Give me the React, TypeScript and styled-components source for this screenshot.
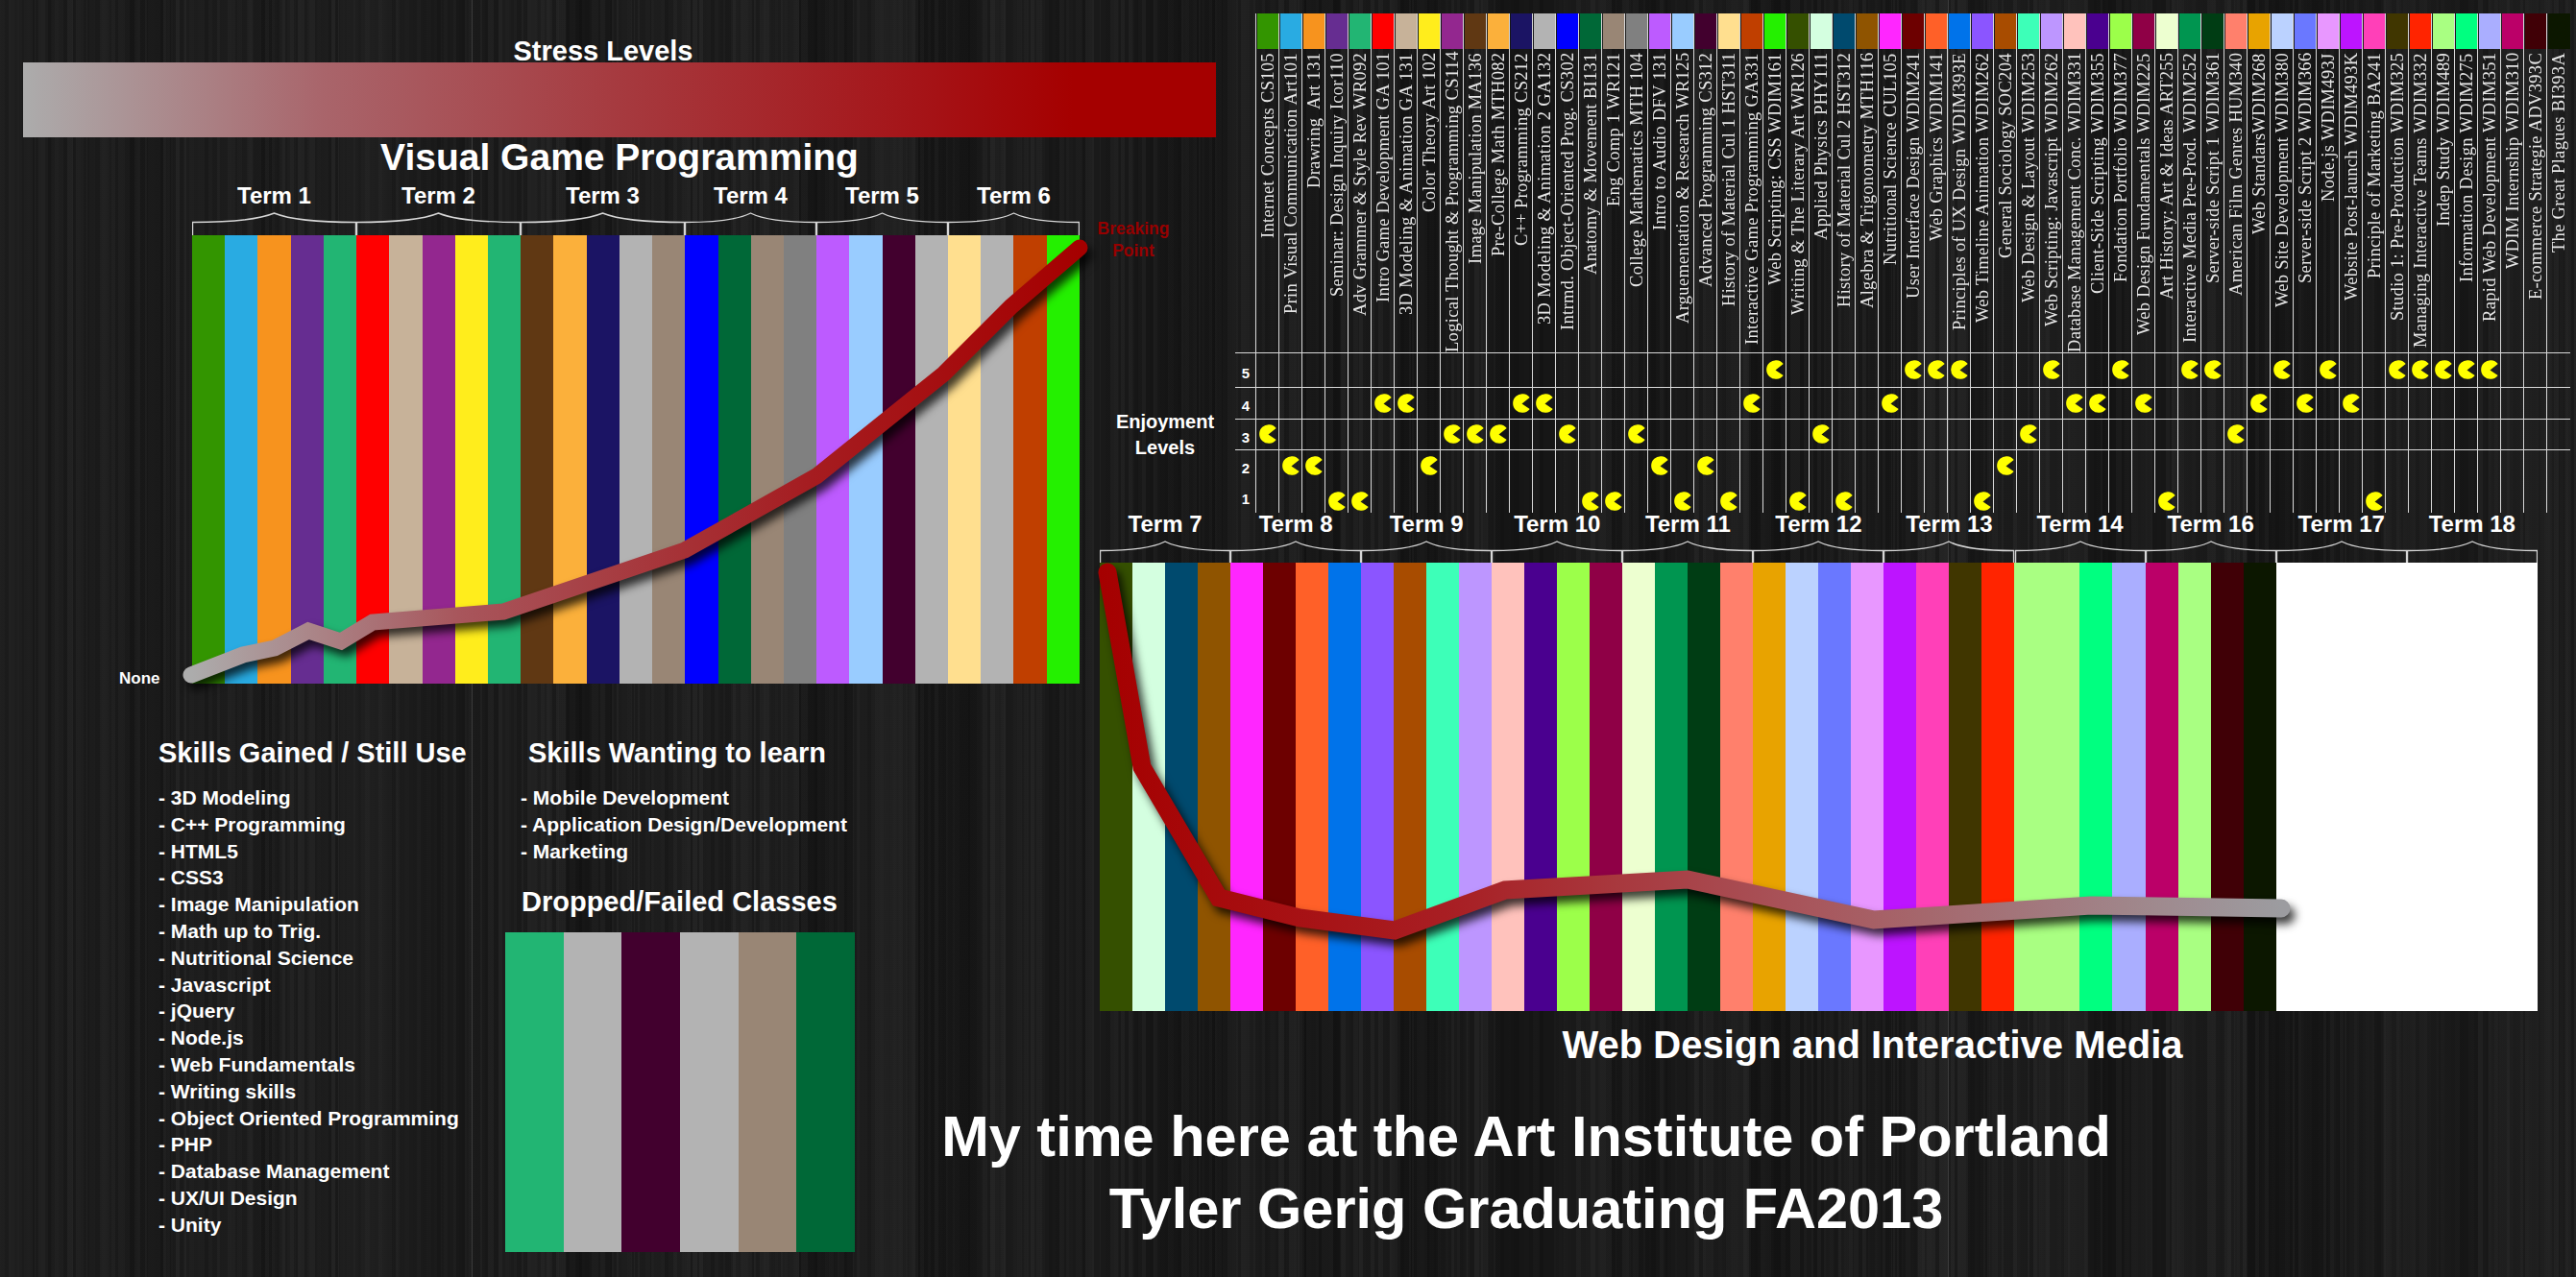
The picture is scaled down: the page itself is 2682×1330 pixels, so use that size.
import React from "react";
import styled, { createGlobalStyle } from "styled-components";

const GlobalStyle = createGlobalStyle`
  html, body {
    margin: 0;
    padding: 0;
    background: #1a1a1a;
  }
`;

const headingFont = `"Liberation Sans", Arial, sans-serif`;

// irregular vertical streaks for the wood grain behind everything
function grain(seed: number, minW: number, maxW: number, dark: number, light: number) {
  let s = seed;
  const rand = () => {
    s = (s * 16807) % 2147483647;
    return s / 2147483647;
  };
  const stops: string[] = [];
  let x = 0;
  while (x < 2682) {
    const w = Math.round(minW + rand() * (maxW - minW));
    const r = rand();
    const color =
      r < 0.55
        ? `rgba(0,0,0,${(rand() * dark).toFixed(3)})`
        : `rgba(255,255,255,${(rand() * light).toFixed(3)})`;
    stops.push(`${color} ${x}px ${x + w}px`);
    x += w;
  }
  return `linear-gradient(90deg, ${stops.join(", ")})`;
}

const courses: [string, string, number][] = [
  ["Internet Concepts CS105", "#339500", 3],
  ["Prin Visual Communication Art101", "#29abe2", 2],
  ["Drawring  Art 131", "#f7931e", 2],
  ["Seminar: Design Inquiry Icor110", "#662d91", 1],
  ["Adv Grammer & Style Rev WR092", "#22b573", 1],
  ["Intro Game Development GA 101", "#ff0000", 4],
  ["3D Modeling & Animation GA 131", "#c7b299", 4],
  ["Color Theory Art 102", "#ffed1c", 2],
  ["Logical Thought & Programming CS114", "#93278f", 3],
  ["Image Manipulation MA136", "#603813", 3],
  ["Pre-College Math MTH082", "#fbb03b", 3],
  ["C++ Programming CS212", "#1b1464", 4],
  ["3D Modeling & Animation 2 GA132", "#b3b3b3", 4],
  ["Intrmd. Object-Oriented Prog. CS302", "#0000ff", 3],
  ["Anatomy & Movement BI131", "#006837", 1],
  ["Eng Comp 1 WR121", "#998675", 1],
  ["College Mathematics MTH 104", "#808080", 3],
  ["Intro to Audio DFV 131", "#bd5bff", 2],
  ["Arguementation & Research WR125", "#99ccff", 1],
  ["Advanced Programming CS312", "#42002e", 2],
  ["History of Material Cul 1 HST311", "#ffdf8f", 1],
  ["Interactive Game Programming GA331", "#c03f00", 4],
  ["Web Scripting: CSS WDIM161", "#24f000", 5],
  ["Writing & The Literary Art WR126", "#355000", 1],
  ["Applied Physics PHY111", "#d4ffe0", 3],
  ["History of Material Cul 2 HST312", "#004a6e", 1],
  ["Algebra & Trigonometry MTH116", "#8f5400", 0],
  ["Nutritional Science CUL105", "#ff26ff", 4],
  ["User Interface Design WDIM241", "#6d0000", 5],
  ["Web Graphics WDIM141", "#ff6028", 5],
  ["Principles of UX Design WDIM393E", "#0073ea", 5],
  ["Web Timeline Animation WDIM262", "#8b55ff", 1],
  ["General Sociology SOC204", "#a84c00", 2],
  ["Web Design & Layout WDIM253", "#3dffb8", 3],
  ["Web Scripting: Javascript WDIM262", "#bd96ff", 5],
  ["Database Management Conc. WDIM331", "#ffc2bc", 4],
  ["Client-Side Scripting WDIM355", "#4a008f", 4],
  ["Fondation Portfolio WDIM377", "#9cff4a", 5],
  ["Web Design Fundamentals WDIM225", "#8f0046", 4],
  ["Art History: Art & Ideas ART255", "#edffd0", 1],
  ["Interactive Media Pre-Prod. WDIM252", "#009550", 5],
  ["Server-side Script 1 WDIM361", "#003d14", 5],
  ["American Film Genres HUM340", "#ff806c", 3],
  ["Web StandarsWDIM268", "#e8a300", 4],
  ["Web Site Development WDIM380", "#bbd2ff", 5],
  ["Server-side Script 2 WDIM366", "#6a78ff", 4],
  ["Node.js WDIM493J", "#e897ff", 5],
  ["Website Post-launch WDIM493K", "#bd14ff", 4],
  ["Principle of Marketing BA241", "#ff40b8", 1],
  ["Studio 1: Pre-Production WDIM325", "#403600", 5],
  ["Managing Interactive Teams WDIM332", "#ff2400", 5],
  ["Indep Study WDIM489", "#a9ff82", 5],
  ["Information Design WDIM275", "#00ff80", 5],
  ["Rapid Web Development WDIM351", "#aaaeff", 5],
  ["WDIM Internship WDIM310", "#bb0068", 0],
  ["E-commerce Strategie ADV393C", "#400006", 0],
  ["The Great Plagues BI393A", "#0c1700", 0],
];

const gameBars = [
  "#339500", "#29abe2", "#f7931e", "#662d91", "#22b573",
  "#ff0000", "#c7b299", "#93278f", "#ffed1c", "#22b573",
  "#603813", "#fbb03b", "#1b1464", "#b3b3b3", "#998675",
  "#0000ff", "#006837", "#998675", "#808080",
  "#bd5bff", "#99ccff", "#42002e", "#b3b3b3",
  "#ffdf8f", "#b3b3b3", "#c03f00", "#24f000",
];

const webBars = [
  "#355000", "#d4ffe0", "#004a6e", "#8f5400", "#ff26ff", "#6d0000", "#ff6028", "#0073ea", "#8b55ff",
  "#a84c00", "#3dffb8", "#bd96ff", "#ffc2bc", "#4a008f", "#9cff4a", "#8f0046", "#edffd0", "#009550",
  "#003d14", "#ff806c", "#e8a300", "#bbd2ff", "#6a78ff", "#e897ff", "#bd14ff", "#ff40b8", "#403600",
  "#ff2400", "#a9ff82", "#a9ff82", "#00ff80", "#aaaeff", "#bb0068", "#a9ff82", "#400006", "#0c1700",
  "#fff", "#fff", "#fff", "#fff", "#fff", "#fff", "#fff", "#fff",
];

const droppedBars = ["#22b573", "#b3b3b3", "#42002e", "#b3b3b3", "#998675", "#006837"];

const gameTerms: [string, number][] = [
  ["Term 1", 171], ["Term 2", 171], ["Term 3", 171], ["Term 4", 137], ["Term 5", 137], ["Term 6", 137],
];

const webTerms = ["Term 7", "Term 8", "Term 9", "Term 10", "Term 11", "Term 12", "Term 13", "Term 14", "Term 16", "Term 17", "Term 18"];

const skillsGained = [
  "3D Modeling", "C++ Programming", "HTML5", "CSS3", "Image Manipulation", "Math up to Trig.",
  "Nutritional Science", "Javascript", "jQuery", "Node.js", "Web Fundamentals", "Writing skills",
  "Object Oriented Programming", "PHP", "Database Management", "UX/UI Design", "Unity",
];

const skillsWanted = ["Mobile Development", "Application Design/Development", "Marketing"];

const Page = styled.div`
  width: 2682px;
  height: 1330px;
  overflow: hidden;
  display: grid;
  grid-template-columns: 1145px 1537px;
  color: #fff;
  font-family: ${headingFont};
  background-color: #1d1d1d;
  background-image:
    linear-gradient(90deg, transparent 491px, #3c3c3c 491px, #3c3c3c 492px, transparent 492px),
    linear-gradient(90deg, transparent 2028px, #3c3c3c 2028px, #3c3c3c 2029px, transparent 2029px),
    ${grain(4711, 1, 5, 0.2, 0.025)},
    ${grain(90210, 14, 70, 0.28, 0.012)};
`;

const LeftColumn = styled.section`
  display: flex;
  flex-direction: column;
  padding: 35px 0 0 24px;
`;

const StressTitle = styled.h2`
  margin: 0;
  width: 1208px;
  height: 30px;
  text-align: center;
  font-size: 29px;
  line-height: 36px;
  font-weight: 700;
`;

const StressBar = styled.div`
  width: 1242px;
  height: 78px;
  background: linear-gradient(90deg, #acacac 0%, #a9656b 25%, #a63a3f 50%, #a51418 75%, #a50000 88%, #a50000 100%);
`;

const ProgramTitle = styled.h1`
  margin: 0;
  width: 1242px;
  height: 44px;
  text-align: center;
  font-size: 39px;
  line-height: 42px;
  font-weight: 700;
`;

const ChartBlock = styled.div`
  margin: 5px 0 0 176px;
  width: 924px;
`;

const TermRow = styled.div`
  display: flex;
`;

const TermCell = styled.div<{ $width: number }>`
  width: ${(p) => p.$width}px;
  flex: none;
  display: flex;
  flex-direction: column;
  align-items: center;
`;

const TermName = styled.span`
  font-size: 24px;
  line-height: 24px;
  margin-bottom: 5px;
  font-weight: 700;
  white-space: nowrap;
`;

const BraceSvg = styled.svg`
  display: block;
`;

const Plot = styled.div<{ $height: number }>`
  position: relative;
  display: flex;
  height: ${(p) => p.$height}px;
`;

const Bar = styled.div<{ $color: string }>`
  flex: 1;
  background: ${(p) => p.$color};
`;

const StressLine = styled.svg`
  position: absolute;
  left: 0;
  top: 0;
  overflow: visible;
  filter: drop-shadow(5px 7px 5px rgba(0, 0, 0, 0.75));
`;

const Breaking = styled.div`
  position: absolute;
  left: 925px;
  top: -18px;
  width: 110px;
  text-align: center;
  color: #960000;
  font-size: 17.5px;
  line-height: 23px;
  font-weight: 700;
`;

const NoneLabel = styled.span`
  position: absolute;
  left: -76px;
  bottom: -5px;
  font-size: 17px;
  font-weight: 700;
`;

const SkillsArea = styled.div`
  margin: 54px 0 0 141px;
  display: flex;
`;

const SkillColumn = styled.div<{ $width: number }>`
  width: ${(p) => p.$width}px;
  flex: none;
`;

const SkillHeading = styled.h3<{ $indent?: number }>`
  margin: 0 0 15px ${(p) => p.$indent ?? 0}px;
  font-size: 29px;
  line-height: 36px;
  font-weight: 700;
  white-space: nowrap;
`;

const SkillList = styled.ul`
  margin: 0;
  padding: 0;
  list-style: none;
`;

const SkillItem = styled.li`
  font-size: 21px;
  line-height: 27.8px;
  font-weight: 700;
  white-space: nowrap;
`;

const DroppedHeading = styled(SkillHeading)`
  margin: 21px 0 14px 1px;
`;

const DroppedBars = styled.div`
  margin-left: -16px;
  width: 364px;
  height: 333px;
  display: flex;
`;

const RightColumn = styled.section`
  display: flex;
  flex-direction: column;
  padding-top: 14px;
`;

const MatrixArea = styled.div`
  display: flex;
  height: 520px;
`;

const LevelsLabel = styled.div`
  width: 136px;
  margin-right: 5px;
  flex: none;
  padding-top: 412px;
  box-sizing: border-box;
  text-align: center;
  font-size: 20px;
  line-height: 27px;
  font-weight: 700;
`;

const RowNumbers = styled.div`
  width: 22px;
  height: 520px;
  box-sizing: border-box;
  flex: none;
  padding-top: 356px;
  display: grid;
  grid-template-rows: 36px 33px 32px 33px 30px;
  font-size: 15px;
  font-weight: 700;
  align-items: center;
  text-align: center;
`;

const Matrix = styled.div`
  position: relative;
  display: grid;
  grid-template-columns: repeat(57, 24px);
`;

const RowLines = styled.div`
  position: absolute;
  left: -22px;
  right: 0;
  top: 353px;
  height: 134px;
  display: grid;
  grid-template-rows: 36px 33px 32px 33px;
`;

const RowLine = styled.div`
  border-top: 1px solid #d8d8d8;
`;

const CourseColumn = styled.div`
  height: 520px;
  display: flex;
  flex-direction: column;
  border-left: 1px solid #d8d8d8;
  margin-left: -1px;
`;

const ColorChip = styled.div<{ $color: string }>`
  height: 37px;
  margin-left: 1px;
  flex: none;
  background: ${(p) => p.$color};
`;

const CourseName = styled.div`
  height: 316px;
  flex: none;
  padding-bottom: 4px;
  box-sizing: border-box;
  writing-mode: vertical-rl;
  transform: rotate(180deg);
  text-align: right;
  font-family: "Liberation Serif", serif;
  font-size: 18.5px;
  line-height: 24px;
  letter-spacing: 0.3px;
  color: #e6e6e6;
  white-space: pre;
`;

const PacGrid = styled.div`
  flex: 1;
  min-height: 0;
  display: grid;
  grid-template-rows: 36px 33px 32px 33px 41px;
  justify-items: center;
  align-items: center;
`;

const PacSvg = styled.svg<{ $row: number }>`
  grid-row: ${(p) => p.$row};
  display: block;
`;

const WebChart = styled.div`
  width: 1497px;
`;

const WebCaption = styled.div`
  width: 1497px;
  margin-top: 12px;
  padding-left: 112px;
  box-sizing: border-box;
  text-align: center;
  font-size: 40px;
  line-height: 46px;
  font-weight: 700;
`;

const Closing = styled.div`
  margin: 35px 0 0 -165px;
  width: 1218px;
  text-align: center;
  font-size: 59.5px;
  line-height: 75px;
  font-weight: 700;
  white-space: nowrap;
`;

function Brace({ width, height }: { width: number; height: number }) {
  const mid = width / 2;
  return (
    <BraceSvg width={width} height={height} viewBox={`0 0 ${width} ${height}`}>
      <path
        d={`M0.5 ${height}V10.5C${mid * 0.45} 10.5 ${mid * 0.8} 8 ${mid} 1C${mid * 1.2} 8 ${mid * 1.55} 10.5 ${width - 0.5} 10.5V${height}`}
        fill="none"
        stroke="#d6d6d6"
        strokeWidth="1.4"
      />
    </BraceSvg>
  );
}

function Pacman({ row }: { row: number }) {
  return (
    <PacSvg $row={row} width="18" height="20" viewBox="0 0 18 20">
      <path d="M17.7 4A9.8 9.8 0 1 0 17.7 16L9.5 10.5Z" fill="#ffff00" />
    </PacSvg>
  );
}

export default function App() {
  return (
    <Page>
      <GlobalStyle />
      <LeftColumn>
        <StressTitle>Stress Levels</StressTitle>
        <StressBar />
        <ProgramTitle>Visual Game Programming</ProgramTitle>
        <ChartBlock>
          <TermRow>
            {gameTerms.map(([name, width]) => (
              <TermCell key={name} $width={width}>
                <TermName>{name}</TermName>
                <Brace width={width} height={24} />
              </TermCell>
            ))}
          </TermRow>
          <Plot $height={467}>
            {gameBars.map((color, i) => (
              <Bar key={i} $color={color} />
            ))}
            <StressLine width="924" height="467" viewBox="0 0 924 467">
              <defs>
                <linearGradient id="gameStress" gradientUnits="userSpaceOnUse" x1="0" y1="0" x2="924" y2="0">
                  <stop offset="0" stopColor="#acacac" />
                  <stop offset="0.3" stopColor="#a8565c" />
                  <stop offset="0.7" stopColor="#a51c20" />
                  <stop offset="1" stopColor="#a50000" />
                </linearGradient>
              </defs>
              <path
                d="M-1 458L53 437L86 430L121 412L155 423L188 403L324 392L513 328L650 251L783 144L853 74L924 13"
                fill="none"
                stroke="url(#gameStress)"
                strokeWidth="17"
                strokeLinecap="round"
                strokeLinejoin="miter"
              />
            </StressLine>
            <Breaking>
              Breaking
              <br />
              Point
            </Breaking>
            <NoneLabel>None</NoneLabel>
          </Plot>
        </ChartBlock>
        <SkillsArea>
          <SkillColumn $width={377}>
            <SkillHeading>Skills Gained / Still Use</SkillHeading>
            <SkillList>
              {skillsGained.map((s) => (
                <SkillItem key={s}>- {s}</SkillItem>
              ))}
            </SkillList>
          </SkillColumn>
          <SkillColumn $width={364}>
            <SkillHeading $indent={8}>Skills Wanting to learn</SkillHeading>
            <SkillList>
              {skillsWanted.map((s) => (
                <SkillItem key={s}>- {s}</SkillItem>
              ))}
            </SkillList>
            <DroppedHeading>Dropped/Failed Classes</DroppedHeading>
            <DroppedBars>
              {droppedBars.map((color, i) => (
                <Bar key={i} $color={color} />
              ))}
            </DroppedBars>
          </SkillColumn>
        </SkillsArea>
      </LeftColumn>
      <RightColumn>
        <MatrixArea>
          <LevelsLabel>
            Enjoyment
            <br />
            Levels
          </LevelsLabel>
          <RowNumbers>
            <span>5</span>
            <span>4</span>
            <span>3</span>
            <span>2</span>
            <span>1</span>
          </RowNumbers>
          <Matrix>
            {courses.map(([name, color, level]) => (
              <CourseColumn key={name}>
                <ColorChip $color={color} />
                <CourseName>{name}</CourseName>
                <PacGrid>{level > 0 && <Pacman row={6 - level} />}</PacGrid>
              </CourseColumn>
            ))}
            <RowLines>
              <RowLine />
              <RowLine />
              <RowLine />
              <RowLine />
            </RowLines>
          </Matrix>
        </MatrixArea>
        <WebChart>
          <TermRow>
            {webTerms.map((name) => (
              <TermCell key={name} $width={136.09}>
                <TermName>{name}</TermName>
                <Brace width={136.09} height={23} />
              </TermCell>
            ))}
          </TermRow>
          <Plot $height={467}>
            {webBars.map((color, i) => (
              <Bar key={i} $color={color} />
            ))}
            <StressLine width="1497" height="467" viewBox="0 0 1497 467">
              <defs>
                <linearGradient id="webStress" gradientUnits="userSpaceOnUse" x1="0" y1="0" x2="1230" y2="0">
                  <stop offset="0" stopColor="#a50000" />
                  <stop offset="0.3" stopColor="#a81f24" />
                  <stop offset="0.6" stopColor="#a8565c" />
                  <stop offset="1" stopColor="#9c9ca0" />
                </linearGradient>
              </defs>
              <path
                d="M8 10L44 213L124 349L208 370L307 383L422 341L612 330L806 372L1032 357L1230 360"
                fill="none"
                stroke="url(#webStress)"
                strokeWidth="19"
                strokeLinecap="round"
                strokeLinejoin="miter"
              />
            </StressLine>
          </Plot>
          <WebCaption>Web Design and Interactive Media</WebCaption>
          <Closing>
            My time here at the Art Institute of Portland
            <br />
            Tyler Gerig Graduating FA2013
          </Closing>
        </WebChart>
      </RightColumn>
    </Page>
  );
}
